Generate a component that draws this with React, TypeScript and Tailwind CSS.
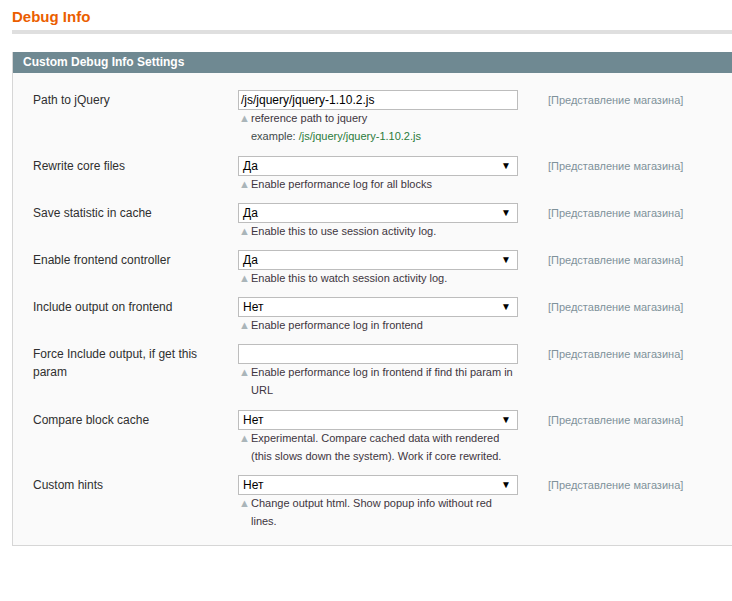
import React from "react";

type Row = {
  label: string;
  kind: "text" | "select";
  value: string;
  hint: React.ReactNode;
  tall?: boolean;
};

const ROWS: Row[] = [
  {
    label: "Path to jQuery",
    kind: "text",
    value: "/js/jquery/jquery-1.10.2.js",
    tall: true,
    hint: (
      <>
        reference path to jquery
        <br />
        <span className="text-[#3f4a4a]">example: </span>
        <span className="text-[#2b7a3a]">/js/jquery/jquery-1.10.2.js</span>
      </>
    ),
  },
  { label: "Rewrite core files", kind: "select", value: "Да", hint: "Enable performance log for all blocks" },
  { label: "Save statistic in cache", kind: "select", value: "Да", hint: "Enable this to use session activity log." },
  { label: "Enable frontend controller", kind: "select", value: "Да", hint: "Enable this to watch session activity log." },
  { label: "Include output on frontend", kind: "select", value: "Нет", hint: "Enable performance log in frontend" },
  {
    label: "Force Include output, if get this param",
    kind: "text",
    value: "",
    tall: true,
    hint: "Enable performance log in frontend if find thi param in URL",
  },
  {
    label: "Compare block cache",
    kind: "select",
    value: "Нет",
    hint: "Experimental. Compare cached data with rendered (this slows down the system). Work if core rewrited.",
  },
  {
    label: "Custom hints",
    kind: "select",
    value: "Нет",
    hint: "Change output html. Show popup info without red lines.",
  },
];

function Field({ row }: { row: Row }) {
  if (row.kind === "text") {
    return (
      <div className="h-[20px] w-[280px] border border-[#bdbdbd] bg-white px-[2px] text-[12px] leading-[18px] text-black">
        {row.value}
      </div>
    );
  }
  return (
    <div className="flex h-[20px] w-[280px] items-center justify-between border border-[#bdbdbd] bg-white pl-[4px] pr-[6px] text-[12px] leading-[18px] text-black">
      <span>{row.value}</span>
      <span className="text-[10px]">▼</span>
    </div>
  );
}

export default function App() {
  return (
    <div
      className="min-h-[601px] w-[732px] overflow-hidden bg-white pl-[12px]"
      style={{ fontFamily: '"Liberation Sans", Arial, sans-serif' }}
    >
      <h1 className="pt-[7px] text-[15px] font-bold leading-[20px] text-[#eb5e00]">Debug Info</h1>
      <div className="mt-[3px] h-[4px] bg-[#dfdfdf]" />

      <div className="mt-[18px] border-b border-l border-[#d6d6d6] bg-[#fafafa]">
        <div className="h-[21px] bg-[#6f8992] pl-[10px] text-[12px] font-bold leading-[21px] text-white">
          Custom Debug Info Settings
        </div>
        <div className="pt-[13px] pb-[9px]">
          {ROWS.map((row) => (
            <div key={row.label} className={row.tall ? "flex pt-[4px] pb-[6px]" : "flex pt-[4px] pb-[5px]"}>
              <div className="w-[225px] shrink-0 pl-[20px] pr-[35px] pt-[1px] text-[12px] leading-[18px] text-[#2f2f2f]">
                {row.label}
              </div>
              <div className="w-[280px] shrink-0">
                <Field row={row} />
                <div className="relative -top-[1px] w-[280px] pl-[13px] text-[11px] leading-[18px] text-[#3d3540]">
                  <span className="absolute left-[1px] top-[0px] text-[11px] text-[#aab5b9]">▲</span>
                  {row.hint}
                </div>
              </div>
              <div className="pl-[30px] pt-[1px] text-[11px] leading-[18px] text-[#7f929a]">
                [Представление магазина]
              </div>
            </div>
          ))}
        </div>
      </div>
    </div>
  );
}
